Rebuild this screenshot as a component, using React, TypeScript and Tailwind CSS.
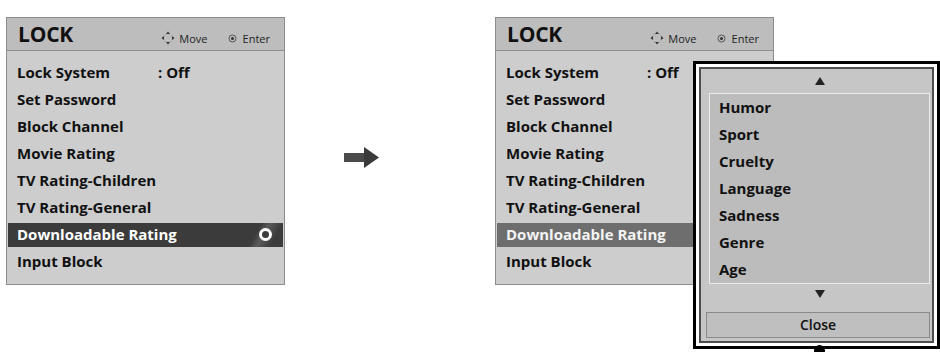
import React from "react";

const items = [
  "Lock System",
  "Set Password",
  "Block Channel",
  "Movie Rating",
  "TV Rating-Children",
  "TV Rating-General",
  "Downloadable Rating",
  "Input Block",
];

const popupItems = ["Humor", "Sport", "Cruelty", "Language", "Sadness", "Genre", "Age"];

function MoveIcon() {
  return (
    <svg width="14" height="14" viewBox="0 0 14 14">
      <circle cx="7" cy="7" r="4.5" fill="none" stroke="#9a9a9a" strokeWidth="1" strokeDasharray="1.5 1.5" />
      <polygon points="7,0.5 9,3 5,3" fill="#333" />
      <polygon points="7,13.5 9,11 5,11" fill="#333" />
      <polygon points="0.5,7 3,5 3,9" fill="#333" />
      <polygon points="13.5,7 11,5 11,9" fill="#333" />
    </svg>
  );
}

function EnterIcon() {
  return (
    <svg width="9" height="9" viewBox="0 0 9 9">
      <circle cx="4.5" cy="4.5" r="3.5" fill="none" stroke="#555" strokeWidth="1" />
      <circle cx="4.5" cy="4.5" r="1.5" fill="#333" />
    </svg>
  );
}

function Panel({ focused }: { focused: boolean }) {
  return (
    <div className="w-[279px] border border-[#8c8c8c] bg-[#cdcdcd] shrink-0">
      <div className="h-[33px] bg-[#bdbdbd] border-b border-[#8e8e8e] flex items-center pl-[11px] pr-[14px]">
        <span className="text-[21px] font-bold tracking-[-0.2px] text-[#111] leading-none">LOCK</span>
        <div className="ml-auto flex items-center mt-[8px] text-[11px] text-[#222] leading-none">
          <MoveIcon />
          <span className="ml-[4px]">Move</span>
          <span className="ml-[20px]">
            <EnterIcon />
          </span>
          <span className="ml-[6px]">Enter</span>
        </div>
      </div>
      <div className="pt-[8px] pb-[9px]">
        {items.map((t, i) => {
          const hl = i === 6;
          return (
            <div key={t} className="h-[27px] flex items-center">
              <div
                className={
                  hl
                    ? focused
                      ? "h-[24px] mx-[1px] flex-1 flex items-center pl-[9px] pr-[11px] bg-[#3b3b3b] text-white relative overflow-hidden"
                      : "h-[24px] mx-[1px] flex-1 flex items-center pl-[9px] bg-[#6e6e6e] text-[#f4f4f4]"
                    : "flex-1 flex items-center pl-[10px] text-[#111]"
                }
              >
                <span className="w-[141px] text-[15px] font-bold leading-none whitespace-nowrap">{t}</span>
                {i === 0 && <span className="text-[15px] font-bold leading-none">: Off</span>}
                {hl && focused && (
                  <>
                    <div className="absolute right-[0px] top-0 h-[24px] w-[40px] bg-[linear-gradient(120deg,transparent_35%,#5a5a5a_50%,transparent_75%)]" />
                    <div className="ml-auto relative w-[13px] h-[13px] rounded-full bg-white flex items-center justify-center">
                      <div className="w-[7px] h-[7px] rounded-full bg-[#3b3b3b]" />
                    </div>
                  </>
                )}
              </div>
            </div>
          );
        })}
      </div>
    </div>
  );
}

function Arrow() {
  return (
    <svg width="36" height="22" viewBox="0 0 36 22">
      <rect x="0" y="6" width="21" height="9" fill="#4a4a4a" />
      <polygon points="20,0 35,10.5 20,21" fill="#3a3a3a" />
    </svg>
  );
}

export default function App() {
  return (
    <div className="w-[940px] h-[352px] bg-white relative overflow-hidden font-['Open_Sans',sans-serif]">
      <div className="flex items-start pt-[17px] pl-[6px]">
        <Panel focused={true} />
        <div className="ml-[59px] mt-[130px]">
          <Arrow />
        </div>
        <div className="ml-[115px]">
          <Panel focused={false} />
        </div>
      </div>

      {/* Popup */}
      <div className="absolute left-[693px] top-[61px] w-[247px] h-[288px] border-[3px] border-black bg-white p-[3px]">
        <div className="h-full border-2 border-[#4e4e4e] bg-[#c6c6c6] flex flex-col pl-[8px] pr-[2px]">
          <div className="h-[24px] flex items-center justify-center">
            <svg width="10" height="8" viewBox="0 0 10 8">
              <polygon points="5,0 10,8 0,8" fill="#222" />
            </svg>
          </div>
          <div className="border border-[#ededed] bg-[#bcbcbc]">
            {popupItems.map((p) => (
              <div key={p} className="h-[27px] flex items-center pl-[9px] text-[15px] font-bold text-[#111] leading-none">
                {p}
              </div>
            ))}
          </div>
          <div className="h-[20px] flex items-center justify-center">
            <svg width="10" height="8" viewBox="0 0 10 8">
              <polygon points="0,0 10,0 5,8" fill="#222" />
            </svg>
          </div>
          <div className="mt-[8px] h-[26px] ml-[-3px] border border-[#8a8a8a] bg-[#bfbfbf] flex items-center justify-center text-[14px] font-semibold text-[#111] leading-none">
            Close
          </div>
        </div>
      </div>
      <div className="absolute left-[814px] top-[345px] w-[11px] h-[11px] rounded-full bg-black" />
    </div>
  );
}
